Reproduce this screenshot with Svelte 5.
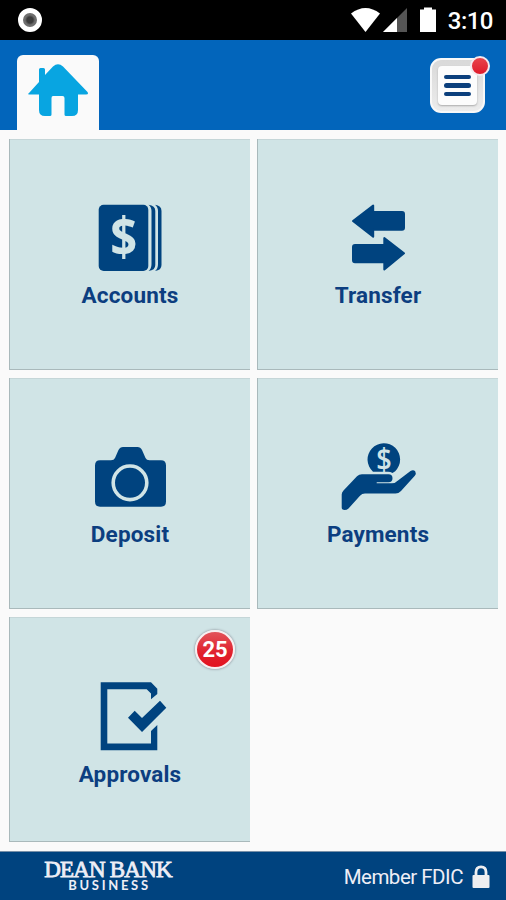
<script lang="ts">
  interface Tile {
    id: string;
    label: string;
    badge?: number;
  }

  const tiles: Tile[] = [
    { id: "accounts", label: "Accounts" },
    { id: "transfer", label: "Transfer" },
    { id: "deposit", label: "Deposit" },
    { id: "payments", label: "Payments" },
    { id: "approvals", label: "Approvals", badge: 25 },
  ];

  let hasNotice = $state(true);
</script>

<div class="screen">
  <div class="status-bar">
    <span class="recorder"></span>
    <svg class="signals" width="88" height="26" viewBox="0 0 88 26">
      <path d="M0 6.5Q14.5-4.5 29 6.5L14.5 25Z" fill="#fff" />
      <path d="M56 1V25H32Z" fill="#555" />
      <path d="M46 11V25H32Z" fill="#fff" />
      <path d="M69 2.5h4V0.5h8V2.5h4V25H69Z" fill="#fff" />
    </svg>
    <span class="clock">3:10</span>
  </div>

  <header>
    <div class="home-tab">
      <svg width="60" height="53" viewBox="0 0 60 53">
        <path
          d="M1 29L11 18V5.5Q11 4 12.5 4H15.5Q17 4 17 5.5V11L25 2.5Q30-2 35 2.5L59.5 28Q61 30.5 58 30.5H50V46Q50 52 44 52H38Q36.5 52 36.5 50.5V34Q36.5 32 34.5 32H25Q23.5 32 23.5 34V50.5Q23.5 52 22 52H17Q11 52 11 46V30.5H2Q-1 30.5 1 29Z"
          fill="#08a5e1"
        />
      </svg>
    </div>
    <button type="button" class="menu" aria-label="Menu" onclick={() => (hasNotice = false)}>
      <span class="menu-face">
        <i></i>
        <i></i>
        <i></i>
      </span>
      {#if hasNotice}
        <span class="notice"></span>
      {/if}
    </button>
  </header>

  <main>
    {#each tiles as tile (tile.id)}
      <button type="button" class="tile">
        <svg width="91" height="78" viewBox="0 0 91 78" fill="#00437f">
          {#if tile.id === "accounts"}
            <rect x="14.7" y="5.7" width="49.6" height="66.3" rx="5" />
            <path d="M64.5 5.7Q71.3 6.5 71.3 12V66Q71.3 71.3 64.5 72Q67.5 70 67.5 65V12Q67.5 8 64.5 5.7Z" />
            <path d="M71 5.7Q77.5 6.5 77.5 12V66Q77.5 71.3 71 72Q74 70 74 65V12Q74 8 71 5.7Z" />
            <text class="dollar" x="26.2" y="57.2" textLength="27" lengthAdjust="spacingAndGlyphs">$</text>
          {:else if tile.id === "transfer"}
            <g stroke="#00437f" stroke-width="2" stroke-linejoin="round">
              <path d="M21 22L41.2 6.5V13H70Q72 13 72 15V28.7Q72 30.7 70 30.7H41.2V37.7Z" />
              <path d="M72 54.3L52.3 39V46H23Q21 46 21 48V61.3Q21 63.3 23 63.3H52.3V70.5Z" />
            </g>
          {:else if tile.id === "deposit"}
            <path
              d="M11 27.5Q11 22.3 16 22.3H27Q30 22.3 31 20L34.5 12Q36 9 39 9H53.5Q56.5 9 58 12L61.5 20Q62.5 22.3 65.5 22.3H77Q82 22.3 82 27.5V63.5Q82 68.7 77 68.7H16Q11 68.7 11 63.5Z"
            />
            <circle cx="46" cy="44.8" r="16.8" fill="none" stroke="#d0e4e6" stroke-width="3.6" />
          {:else if tile.id === "payments"}
            <path d="M41 33.7A16.3 16.3 0 1 1 63.2 33.2L60.5 35Q58.5 33.7 56 33.7Z" />
            <text class="coin" x="44.2" y="32.2" textLength="15.5" lengthAdjust="spacingAndGlyphs">$</text>
            <path
              d="M9.7 56.5Q9.7 54.3 11.5 52.5L25 38.2Q27 36.3 30 36.3H56.5Q60.5 36.3 60.5 40.3Q60.5 44.2 56.5 44.2H44.7V45.2H60Q63.5 45.2 66 42.5L78.5 33Q81.5 31.2 83.3 33.5Q84.5 35.5 82.8 37.8L69 53Q66.5 55.6 63.5 55.6H33Q30 55.6 28 57.7L16.5 70.5Q14.8 72 12.5 72Q9.7 72 9.7 69.5Z"
            />
          {:else}
            <path
              d="M16.7 5.3H67L73.3 11.7V17L67 22.3V16.5L62.7 12.3H23.3V66.5H67V54L73.3 48V73.3H16.7Z"
            />
            <path d="M44 40.7L50.7 33.7L58 41L76 23.7L82.3 30.7L58 55Z" />
          {/if}
        </svg>
        <span class="label">{tile.label}</span>
        {#if tile.badge}
          <span class="badge">{tile.badge}</span>
        {/if}
      </button>
    {/each}
  </main>

  <footer>
    <div class="brand">
      <span class="brand-name">DEAN BANK</span>
      <span class="brand-unit">BUSINESS</span>
    </div>
    <div class="member">
      <span>Member FDIC</span>
      <svg width="18" height="24" viewBox="0 0 18 24">
        <path d="M4 11V7Q4 1.8 9 1.8Q14 1.8 14 7V11" fill="none" stroke="#eeeef0" stroke-width="2.8" />
        <rect x="0.5" y="10" width="17" height="13" rx="1" fill="#eeeef0" />
      </svg>
    </div>
  </footer>
</div>

<style>
  :global(body) {
    margin: 0;
  }

  .screen {
    display: flex;
    flex-direction: column;
    width: 506px;
    height: 900px;
    background: #fafafa;
    font-family: Roboto, "Liberation Sans", sans-serif;
    overflow: hidden;
  }

  button {
    padding: 0;
    border: none;
    font-family: inherit;
    cursor: pointer;
  }

  .status-bar {
    display: flex;
    align-items: center;
    flex: none;
    height: 40px;
    box-sizing: border-box;
    padding: 0 13px 0 18px;
    background: #000;
    color: #fff;
  }

  .recorder {
    width: 14px;
    height: 14px;
    border: 5px solid #fff;
    border-radius: 50%;
    background: radial-gradient(circle, #3c3c3c 0 3px, #6e6e6e 5px);
  }

  .signals {
    margin-left: auto;
  }

  .clock {
    width: 46px;
    margin: 2px 0 0 8px;
    font-size: 24px;
    font-weight: 500;
    line-height: 28px;
    letter-spacing: -0.5px;
    text-align: right;
    white-space: nowrap;
  }

  header {
    display: flex;
    justify-content: space-between;
    flex: none;
    height: 90px;
    box-sizing: border-box;
    padding: 15px 21px 0 17px;
    background: #0265bb;
  }

  .home-tab {
    width: 82px;
    height: 75px;
    box-sizing: border-box;
    padding: 9px 0 0 11px;
    border-radius: 6px 6px 0 0;
    background: #fafafa;
  }

  .menu {
    position: relative;
    width: 55px;
    height: 55px;
    margin-top: 3px;
    padding: 6px;
    border: 2px solid #f8f8f8;
    border-radius: 11px;
    background: linear-gradient(#d9d9d9, #ececec);
  }

  .menu-face {
    display: flex;
    flex-direction: column;
    align-items: center;
    justify-content: center;
    gap: 4px;
    height: 39px;
    border-radius: 4px;
    background: #fcfcfc;
    box-shadow: 0 1px 2px #aaa;
  }

  .menu-face i {
    width: 27px;
    height: 4.5px;
    border-radius: 3px;
    background: #0b3f7c;
  }

  .notice {
    position: absolute;
    top: -4px;
    right: -7px;
    width: 16px;
    height: 16px;
    border: 2px solid #f4e9ee;
    border-radius: 50%;
    background: linear-gradient(#e8434b, #e01b2b);
  }

  main {
    display: grid;
    grid-template-columns: 241px 241px;
    grid-template-rows: 231px 231px 225px;
    gap: 8px 7px;
    flex: 1;
    padding: 9px 8px 0 9px;
  }

  .tile {
    position: relative;
    display: flex;
    flex-direction: column;
    align-items: center;
    padding-top: 60px;
    background: #d0e4e6;
    box-shadow: inset 1px 0 #a9b9bb, inset 0 -1px #a9b9bb, inset 0 1px #c5d6d8;
  }

  .label {
    margin: 4px 0 0 1px;
    color: #0c3e80;
    font-size: 22.5px;
    font-weight: 700;
    line-height: 28px;
    letter-spacing: 0.15px;
  }

  .tile:last-child .label {
    margin-top: 5px;
  }

  .dollar,
  .coin {
    fill: #d0e4e6;
    font-family: "Open Sans", sans-serif;
    font-size: 53px;
    font-weight: 700;
  }

  .coin {
    font-size: 30px;
    font-weight: 600;
  }

  .badge {
    position: absolute;
    top: 13px;
    right: 15px;
    width: 36px;
    height: 35px;
    border: 2px solid #f8eef0;
    border-radius: 50%;
    background: linear-gradient(#e2535a, #e0202d 60%, #e3121f);
    box-shadow: 0 0 2px 1px #a9b5bb;
    color: #fff;
    font-size: 22px;
    font-weight: 700;
    line-height: 36px;
    text-align: center;
  }

  footer {
    display: flex;
    justify-content: space-between;
    flex: none;
    height: 49px;
    box-sizing: border-box;
    padding: 0 16px 0 44px;
    border-top: 1px solid #7890a8;
    background: #00437f;
    color: #eeeef6;
  }

  .brand {
    display: flex;
    flex-direction: column;
    align-items: center;
    width: 128px;
    padding-top: 8px;
  }

  .brand-name {
    font-family: "Liberation Serif", serif;
    font-size: 23px;
    font-weight: 400;
    line-height: 20px;
    letter-spacing: -0.8px;
    white-space: nowrap;
    -webkit-text-stroke: 0.8px #eeeef6;
  }

  .brand-unit {
    margin-left: 3px;
    font-family: Lato, sans-serif;
    font-size: 13px;
    font-weight: 700;
    line-height: 11px;
    letter-spacing: 2.7px;
  }

  .member {
    display: flex;
    align-items: center;
    gap: 9px;
    padding-top: 1px;
    font-size: 20.5px;
    line-height: 28px;
    letter-spacing: -0.5px;
    white-space: nowrap;
  }
</style>
